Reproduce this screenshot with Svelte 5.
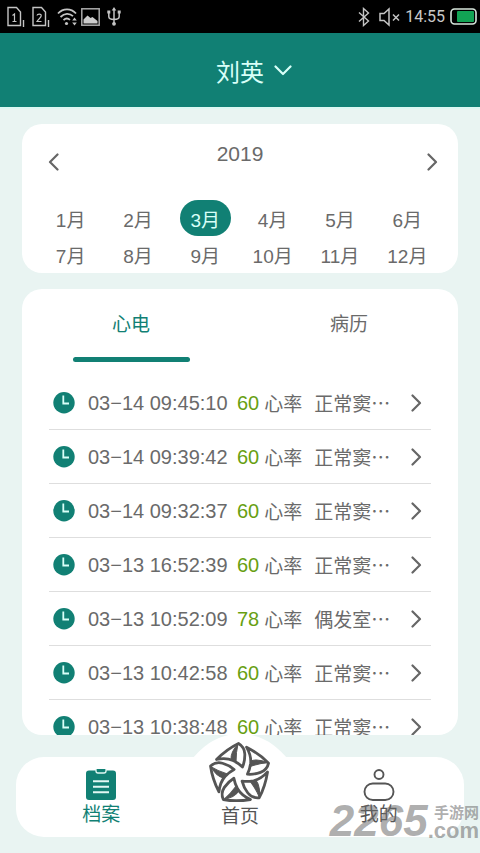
<script>
  const months = Array.from({ length: 12 }, (_, i) => i + 1);
  let year = $state(2019);
  let month = $state(3);
  let tab = $state('心电');

  const records = [
    { time: '03−14 09:45:10', rate: 60, result: '正常窦…' },
    { time: '03−14 09:39:42', rate: 60, result: '正常窦…' },
    { time: '03−14 09:32:37', rate: 60, result: '正常窦…' },
    { time: '03−13 16:52:39', rate: 60, result: '正常窦…' },
    { time: '03−13 10:52:09', rate: 78, result: '偶发室…' },
    { time: '03−13 10:42:58', rate: 60, result: '正常窦…' },
    { time: '03−13 10:38:48', rate: 60, result: '正常窦…' }
  ];
</script>

<div class="app">
  <div class="status">
    <div class="status-group">
      <svg width="18" height="22" viewBox="0 0 18 22" fill="none" stroke="#c4c4c4" stroke-width="1.4">
        <path d="M1 1.5h8.500l4 4.500v13.500H1zM16.500 14v7" />
        <path d="M5.500 9.500l2-1.500v7.500M5.500 15.500h4" stroke-width="1.200" />
      </svg>
      <svg width="18" height="22" viewBox="0 0 18 22" fill="none" stroke="#c4c4c4" stroke-width="1.4">
        <path d="M1 1.500h8.500l4 4.500v13.500H1zM16.500 14v7" />
        <path d="M5 9.500c.4-2 4.500-2 4.200.3-.2 1.700-3 3.500-4.200 5.700h4.500" stroke-width="1.200" />
      </svg>
      <svg class="wifi" width="21" height="20" viewBox="0 0 21 20" fill="none" stroke="#c4c4c4" stroke-width="1.800">
        <path d="M1 6.500c5-5.500 13-5.500 18 0M3.500 10c4-4 9-4 12.500-.8M6.500 13.200c2-2 4.500-2 6.500-.3" />
        <circle cx="9.500" cy="16.500" r="1.600" fill="#c4c4c4" stroke="none" />
        <path d="M17.500 10.500l2.300 3h-4.600zM17.500 18.500l2.300-3h-4.600z" fill="#c4c4c4" stroke="none" />
      </svg>
      <svg width="19" height="18" viewBox="0 0 19 18">
        <rect x=".8" y=".8" width="17.400" height="16.400" fill="none" stroke="#aaa" stroke-width="1.500" />
        <path d="M2.500 15.500v-4l4-4 3 2.500 2-1 5 4v2.500z" fill="#ccc" />
      </svg>
      <svg width="14" height="19" viewBox="0 0 14 19" fill="none" stroke="#c4c4c4" stroke-width="1.500">
        <path d="M7 2v14M1.800 5v4.500c0 2 2 3 5.200 3s5.200-1 5.200-3V5" />
        <path d="M7 0l2.300 3.500H4.700zM.3 3.500h3v3h-3zM10.700 3.500h3v3h-3z" fill="#c4c4c4" stroke="none" />
        <circle cx="7" cy="16.800" r="1.900" fill="#c4c4c4" stroke="none" />
      </svg>
    </div>
    <div class="status-group right">
      <svg width="12" height="20" viewBox="0 0 12 20" fill="none" stroke="#c4c4c4" stroke-width="1.400">
        <path d="M1 5.500l9.500 8.500-5 4.500V1.500l5 4.500L1 14.500" />
      </svg>
      <svg class="mute" width="21" height="20" viewBox="0 0 21 20" fill="none" stroke="#c4c4c4" stroke-width="1.500">
        <path d="M1 6.500h4l5-4.500v16l-5-4.500H1zM14 7.500l6 6M20 7.500l-6 6" />
      </svg>
      <span class="clock">14:55</span>
      <svg width="27" height="17" viewBox="0 0 27 17">
        <rect x="1" y="1" width="25" height="15" rx="3.500" fill="none" stroke="#d8e6dc" stroke-width="1.600" />
        <rect x="7" y="3" width="17" height="11" rx="1" fill="#12a454" />
      </svg>
    </div>
  </div>

  <header>
    <button class="patient">
      刘英
      <svg width="18" height="11" viewBox="0 0 18 11" fill="none" stroke="#d8fff8" stroke-width="2.200" stroke-linecap="round" stroke-linejoin="round"><path d="M1.500 1.500L9 9l7.500-7.500" /></svg>
    </button>
  </header>

  <main>
    <section class="card calendar">
      <div class="year">
        <button class="arrow" aria-label="上一年" onclick={() => year--}>
          <svg width="11" height="18" viewBox="0 0 11 18"><path d="M9.500 1.500L2 9l7.500 7.500" /></svg>
        </button>
        <span>{year}</span>
        <button class="arrow" aria-label="下一年" onclick={() => year++}>
          <svg width="11" height="18" viewBox="0 0 11 18"><path d="M1.500 1.500L9 9l-7.500 7.500" /></svg>
        </button>
      </div>
      <div class="months">
        {#each months as m}
          <button class:selected={m === month} onclick={() => (month = m)}>{m}月</button>
        {/each}
      </div>
    </section>

    <section class="card records">
      <div class="tabs" role="tablist">
        {#each ['心电', '病历'] as name}
          <button role="tab" aria-selected={tab === name} class:active={tab === name} onclick={() => (tab = name)}>{name}</button>
        {/each}
      </div>
      <ul>
        {#each records as r}
          <li>
            <a href="#record">
              <svg width="22" height="22" viewBox="0 0 22 22"><circle cx="11" cy="10.700" r="10.700" fill="#118074" /><path d="M10.300 3.500v8h5.700" fill="none" stroke="#d9fff8" stroke-width="1.800" /></svg>
              <span class="time">{r.time}</span>
              <span class="rate">{r.rate}</span>
              <span class="unit">心率</span>
              <span class="result">{r.result}</span>
              <svg class="go" width="11" height="18" viewBox="0 0 11 18"><path d="M1.500 1.500L9 9l-7.500 7.500" /></svg>
            </a>
          </li>
        {/each}
      </ul>
    </section>
  </main>

  <nav>
    <svg class="bump" width="96" height="26" viewBox="0 0 96 26"><path d="M0 26C12 12 26 1 48 1s36 11 48 25z" fill="#fff" /></svg>
    <a href="#files" class="current">
      <svg width="32" height="32" viewBox="0 0 32 32">
        <path d="M4 1.500h24q3 0 3 3V28q0 3-3 3H4q-3 0-3-3V4.500q0-3 3-3z" fill="#118074" />
        <path d="M11 0v2q0 2 2 2h6q2 0 2-2V0" fill="#118074" stroke="#e2f7f3" stroke-width="1.300" />
        <path d="M8 12.300h16M8 17.800h16M8 23.300h16" stroke="#e2f7f3" stroke-width="2" />
      </svg>
      档案
    </a>
    <a href="#home" class="home">
      <svg width="64" height="64" viewBox="-32 -33 64 64" fill="none" stroke="#555" stroke-width="2.800" stroke-linejoin="round">
        {#each [0, 72, 144, 216, 288] as angle}
          <g transform="rotate({angle})">
            <path d="M-23.500 -14.500Q-13 -25 -1.500 -30.500Q4.500 -27 4.800 -20Q5 -13 2.500 -7Q-1 -10.500 -7 -13.500Q-14 -16.500 -23.500 -14.500Z" />
            <path d="M-2 -30Q-9.500 -22 -9 -14.500L-4 -12Q-4 -22 -2 -30Z" fill="#555" stroke-width="1" />
          </g>
        {/each}
      </svg>
      首页
    </a>
    <a href="#mine">
      <svg width="32" height="32" viewBox="0 0 32 32" fill="none" stroke="#555" stroke-width="1.900"><circle cx="16" cy="5.500" r="4.500" /><rect x="1.500" y="14.500" width="29" height="16.500" rx="8.250" /></svg>
      我的
    </a>
  </nav>

  <div class="watermark">
    <span class="digits">2265</span>
    <span class="site"><span>手游网</span><b>.com</b></span>
  </div>
</div>

<style>
  :global(body) { margin: 0; }
  .app {
    position: relative;
    display: flex;
    flex-direction: column;
    height: 100vh;
    overflow: hidden;
    box-sizing: border-box;
    padding-bottom: 16px;
    background: #e9f4f2;
    color: #6a6a6a;
    font-family: 'Liberation Sans', 'Noto Sans CJK SC', sans-serif;
    font-size: 19px;
  }
  button {
    border: 0;
    padding: 0;
    background: none;
    color: inherit;
    font: inherit;
    cursor: pointer;
  }
  a { color: inherit; text-decoration: none; }
  svg { display: block; flex: none; }

  .status {
    flex: none;
    display: flex;
    justify-content: space-between;
    height: 33px;
    padding: 0 3px 0 7px;
    background: #000;
  }
  .status-group { display: flex; align-items: center; gap: 7px; }
  .wifi { margin-right: -4px; }
  .right { gap: 5px; }
  .mute { margin-left: 4px; }
  .clock { color: #c8c8c8; font: 16px/20px Roboto, sans-serif; }

  header {
    flex: none;
    display: flex;
    justify-content: center;
    height: 74px;
    background: #118074;
    border-bottom: 2px solid #dcf8f3;
  }
  .patient {
    display: flex;
    align-items: center;
    gap: 10px;
    padding-left: 28px;
    color: #d8fff8;
    font-size: 24px;
  }

  main {
    flex: 1;
    min-height: 0;
    display: flex;
    flex-direction: column;
    gap: 16px;
    padding: 15px 22px 22px;
  }
  .card { background: #fff; border-radius: 20px; overflow: hidden; }
  .calendar { flex: none; }
  .year {
    display: flex;
    justify-content: space-between;
    padding: 18px 20px 0 26px;
    height: 58px;
    font-size: 21px;
    line-height: 24px;
  }
  .year span { margin-right: 6px; }
  .arrow { height: 40px; }
  .arrow path, .go path {
    fill: none;
    stroke: #666;
    stroke-width: 2.2;
    stroke-linecap: round;
    stroke-linejoin: round;
  }
  .months {
    display: grid;
    grid-template-columns: repeat(6, 1fr);
    justify-items: center;
    padding: 0 17px 1px 15px;
  }
  .months button { min-width: 51px; height: 36px; border-radius: 18px; }
  .months .selected { background: #118074; color: #d8fff8; }

  .records { flex: 1; min-height: 0; }
  .tabs { display: flex; height: 73px; }
  .tabs button {
    flex: 1;
    display: flex;
    flex-direction: column;
    align-items: center;
    justify-content: space-between;
    padding-top: 24px;
    line-height: 24px;
  }
  .tabs button::after { content: ''; width: 117px; height: 5px; border-radius: 3px; }
  .tabs .active { color: #118074; }
  .tabs .active::after { background: #118074; }

  ul { list-style: none; margin: 0; padding: 14px 27px 0; }
  li a {
    display: flex;
    align-items: center;
    height: 53px;
    padding: 0 9px 0 4px;
    border-bottom: 1px solid #dedede;
    line-height: 24px;
  }
  .time { flex: none; margin-left: 13px; min-width: 149px; font-size: 20px; }
  .rate { flex: none; color: #689f12; font-size: 20px; }
  .unit { flex: none; margin: 0 12px 0 5px; }
  .unit, .result { font-family: 'Noto Sans CJK SC', sans-serif; }
  .result { flex: 1; white-space: nowrap; }

  nav {
    position: relative;
    flex: none;
    display: flex;
    height: 80px;
    margin: 0 16px;
    padding: 0 16px;
    background: #fff;
    border-radius: 28px;
  }
  .bump { position: absolute; left: 50%; top: -24px; margin-left: -48px; }
  nav a {
    position: relative;
    flex: 1;
    display: flex;
    flex-direction: column;
    align-items: center;
    justify-content: flex-end;
    gap: 2px;
    padding-bottom: 10px;
    line-height: 24px;
    color: #555;
  }
  nav .current { color: #118074; }
  nav .home { gap: 0; padding-bottom: 8px; }

  .watermark {
    position: absolute;
    right: 1px;
    bottom: 12px;
    display: flex;
    align-items: flex-end;
    color: rgba(105, 105, 105, 0.55);
    font-weight: bold;
    pointer-events: none;
  }
  .digits { font-size: 44px; line-height: 40px; font-style: italic; }
  .site { display: flex; flex-direction: column; align-items: flex-end; font-size: 15px; line-height: 16px; }
  .site b { font-size: 22px; line-height: 20px; }
</style>
